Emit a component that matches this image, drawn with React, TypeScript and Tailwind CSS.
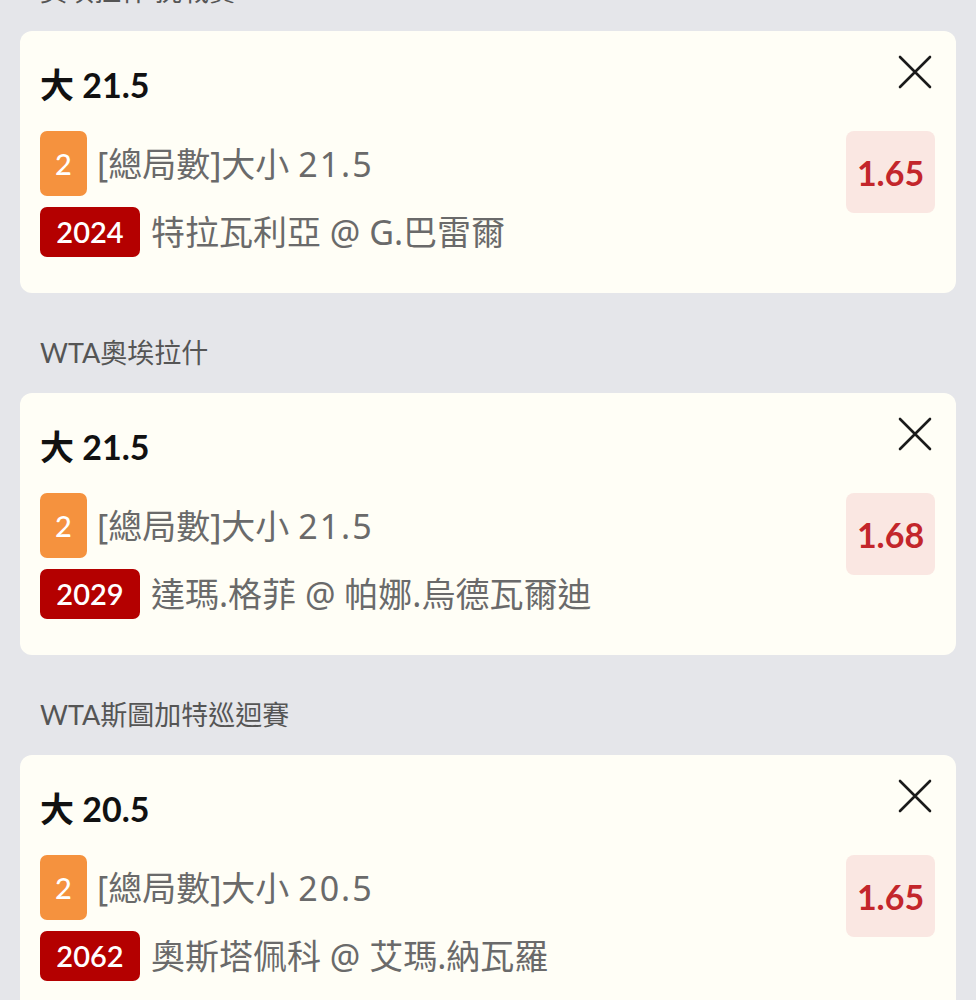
import React from "react";

type Bet = {
  league: string;
  title: string;
  market: string;
  num: string;
  code: string;
  teams: string;
  odds: string;
};

const bets: Bet[] = [
  { league: "奧埃拉什 挑戰賽", title: "大 21.5", market: "[總局數]大小", num: "21.5", code: "2024", teams: "特拉瓦利亞 @ G.巴雷爾", odds: "1.65" },
  { league: "WTA奧埃拉什", title: "大 21.5", market: "[總局數]大小", num: "21.5", code: "2029", teams: "達瑪.格菲 @ 帕娜.烏德瓦爾迪", odds: "1.68" },
  { league: "WTA斯圖加特巡迴賽", title: "大 20.5", market: "[總局數]大小", num: "20.5", code: "2062", teams: "奧斯塔佩科 @ 艾瑪.納瓦羅", odds: "1.65" },
];

const lato = { fontFamily: "Lato, 'Noto Sans CJK TC', sans-serif" } as const;
const noto = { fontFamily: "'Noto Sans', 'Noto Sans CJK TC', sans-serif" } as const;

function CloseIcon() {
  return (
    <svg width="36" height="36" viewBox="0 0 36 36" fill="none">
      <path d="M3 3 L33 33 M33 3 L3 33" stroke="#1a1a1a" strokeWidth="2.6" strokeLinecap="round" />
    </svg>
  );
}

function Card({ bet }: { bet: Bet }) {
  return (
    <div className="relative mx-[20px] rounded-[12px] bg-[#fffef6] pl-[20px] pr-[21px] pt-[33px] pb-[36px]">
      <button className="absolute right-[23px] top-[23px]">
        <CloseIcon />
      </button>
      <div className="h-[42px] text-[34px] font-bold leading-[42px] text-[#111]" style={lato}>
        {bet.title}
      </div>
      <div className="mt-[25px] flex items-start">
        <div className="flex flex-1 flex-col gap-[11px]">
          <div className="flex h-[65px] items-center">
            <span className="flex h-[65px] w-[47px] items-center justify-center rounded-[7px] bg-[#f5923e] text-[29px] font-medium text-white" style={lato}>
              2
            </span>
            <span className="ml-[10px] text-[34px] leading-[42px] text-[#6a6a6a]" style={noto}>
              {bet.market} <span className="tracking-[2px]">{bet.num}</span>
            </span>
          </div>
          <div className="flex h-[50px] items-center">
            <span className="flex h-[50px] w-[100px] items-center justify-center rounded-[7px] bg-[#b40000] text-[29px] font-semibold text-white" style={lato}>
              {bet.code}
            </span>
            <span className="ml-[11px] text-[34px] leading-[42px] text-[#6a6a6a]" style={noto}>
              {bet.teams}
            </span>
          </div>
        </div>
        <div className="flex h-[82px] w-[89px] items-center justify-center rounded-[8px] bg-[#fae7e2] text-[34px] font-bold text-[#c3262b]" style={lato}>
          {bet.odds}
        </div>
      </div>
    </div>
  );
}

export default function App() {
  return (
    <div className="h-[1000px] overflow-hidden bg-[#e5e6ea]">
      {bets.map((b, i) => (
        <div key={i}>
          <div
            className={
              i === 0
                ? "-mt-[26px] pb-[23px] pl-[40px] text-[27px] leading-[34px] text-[#555]"
                : "pt-[43px] pb-[23px] pl-[40px] text-[27px] leading-[34px] text-[#555]"
            }
            style={lato}
          >
            {b.league}
          </div>
          <Card bet={b} />
        </div>
      ))}
    </div>
  );
}
